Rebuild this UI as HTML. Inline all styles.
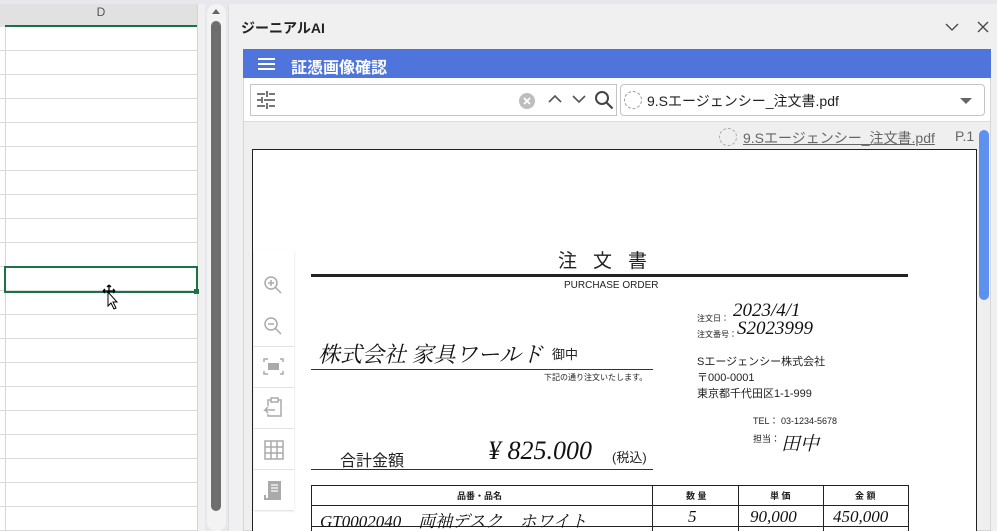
<!DOCTYPE html>
<html style="width:997px;height:531px;overflow:hidden"><head><meta charset="utf-8"><style>
*{margin:0;padding:0;box-sizing:border-box}
body{width:997px;height:531px;overflow:hidden;background:#e6e8ee;font-family:"Liberation Sans","Noto Sans CJK JP",sans-serif;position:relative}
.a{position:absolute}
.hw{font-family:"Liberation Serif","Noto Serif CJK SC",serif;font-style:italic;color:#111;white-space:nowrap}
.jp{font-family:"Liberation Sans","Noto Sans CJK JP",sans-serif;color:#222;white-space:nowrap}
</style></head><body>
<div class="a" style="left:0;top:4px;width:205px;height:527px;background:#fff"></div>
<div class="a" style="left:5px;top:4px;width:192px;height:23px;background:#e1e1e1;border-bottom:2px solid #1e7145;text-align:center;font-size:12px;color:#555;line-height:17px">D</div>
<div class="a" style="left:0;top:4px;width:5px;height:23px;background:#e1e1e1"></div>
<div class="a" style="left:197px;top:4px;width:8px;height:527px;background:#f0f0f0;border-left:1px solid #d4d4d4"></div>
<div class="a" style="left:5px;top:27px;width:1px;height:504px;background:#d8d8d8"></div>
<div class="a" style="left:0;top:27px;width:197px;height:504px;background:repeating-linear-gradient(to bottom,transparent 0 23px,#dadada 23px 24px)"></div>
<div class="a" style="left:4px;top:266px;width:194px;height:27px;border:2px solid #1e7145"></div>
<div class="a" style="left:194px;top:289px;width:5px;height:5px;background:#1e7145"></div>
<svg class="a" style="left:100px;top:283px" width="22" height="28"><path d="M9 2v12M3 8h12M9 2l-2 2M9 2l2 2M3 8l2-2M3 8l2 2M15 8l-2-2M15 8l-2 2" stroke="#000" stroke-width="1.3" fill="none"/><path d="M8 9v14l3-3 3 6 2-1-3-6h4z" fill="#fff" stroke="#000" stroke-width="1"/></svg>
<div class="a" style="left:207px;top:4px;width:19px;height:527px;background:#f3f3f3;border-radius:9px"></div>
<div class="a" style="left:212px;top:9px;width:0;height:0;border-left:4px solid transparent;border-right:4px solid transparent;border-bottom:5px solid #666"></div>
<div class="a" style="left:211px;top:21px;width:10px;height:490px;background:#6e6e6e;border-radius:5px"></div>
<div class="a" style="left:228px;top:4px;width:769px;height:527px;background:#f0f0f0;border-left:1px solid #ddd"></div>
<div class="a" style="left:241px;top:18px;font-size:14px;font-weight:bold;color:#222">ジーニアルAI</div>
<svg class="a" style="left:944px;top:21px" width="16" height="12"><path d="M2 3l6 6 6-6" stroke="#444" stroke-width="1.3" fill="none"/></svg>
<svg class="a" style="left:976px;top:20px" width="14" height="14"><path d="M2 2l10 10M12 2L2 12" stroke="#444" stroke-width="1.3"/></svg>
<div class="a" style="left:243px;top:49px;width:748px;height:482px;border:1px solid #d6d6d6;background:#efefef"></div>
<div class="a" style="left:243px;top:49px;width:748px;height:29px;background:#4f74dc"></div>
<div class="a" style="left:258px;top:58px;width:17px;height:2px;background:#fff;box-shadow:0 5px 0 #fff,0 10px 0 #fff"></div>
<div class="a" style="left:291px;top:54px;font-size:16px;color:#fff;font-weight:bold">証憑画像確認</div>
<div class="a" style="left:244px;top:78px;width:746px;height:44px;background:#fff;border-bottom:1px solid #ddd"></div>
<div class="a" style="left:250px;top:84px;width:367px;height:32px;border:1px solid #c4c4c4;background:#fff"></div>
<svg class="a" style="left:255px;top:90px" width="22" height="20"><path d="M2 4h8M14 4h6M12 1v6M2 10h4M9 10h11M7 7v6M2 16h8M14 16h6M12 13v6" stroke="#666" stroke-width="1.8"/></svg>
<svg class="a" style="left:518px;top:92px" width="18" height="18"><circle cx="9" cy="9" r="8" fill="#bdbdbd"/><path d="M6 6l6 6M12 6l-6 6" stroke="#fff" stroke-width="1.8"/></svg>
<svg class="a" style="left:548px;top:94px" width="14" height="10"><path d="M1 8l6-6 6 6" stroke="#555" stroke-width="1.6" fill="none"/></svg>
<svg class="a" style="left:572px;top:94px" width="14" height="10"><path d="M1 2l6 6 6-6" stroke="#555" stroke-width="1.6" fill="none"/></svg>
<svg class="a" style="left:594px;top:90px" width="20" height="20"><circle cx="8" cy="8" r="6" stroke="#444" stroke-width="2" fill="none"/><path d="M12.5 12.5l6 6" stroke="#444" stroke-width="2.2"/></svg>
<div class="a" style="left:620px;top:84px;width:365px;height:32px;border:1px solid #c4c4c4;border-radius:4px;background:#fff"></div>
<div class="a" style="left:624px;top:91px;width:18px;height:18px;border:1px dashed #999;border-radius:50%"></div>
<div class="a" style="left:647px;top:91px;font-size:14px;color:#222">9.Sエージェンシー_注文書.pdf</div>
<div class="a" style="left:960px;top:98px;width:0;height:0;border-left:6px solid transparent;border-right:6px solid transparent;border-top:6px solid #666"></div>
<div class="a" style="left:719px;top:128px;width:18px;height:18px;border:1px dashed #aaa;border-radius:50%"></div>
<div class="a" style="left:743px;top:128px;font-size:14px;color:#666;text-decoration:underline">9.Sエージェンシー_注文書.pdf</div>
<div class="a" style="left:955px;top:128px;font-size:14px;color:#666">P.1</div>
<div class="a" style="left:979px;top:130px;width:10px;height:170px;background:#5e91ee;border-radius:5px"></div>
<div class="a" style="left:252px;top:149px;width:725px;height:382px;background:#fff;border:1px solid #222;border-bottom:none"></div>
<div class="a jp" style="left:558px;top:246px;font-size:19px;letter-spacing:16px">注文書</div>
<div class="a" style="left:311px;top:274px;width:597px;height:3px;background:#222"></div>
<div class="a jp" style="left:564px;top:280px;font-size:10px">PURCHASE ORDER</div>
<div class="a hw" style="left:318px;top:338px;font-size:22px">株式会社 家具ワールド</div>
<div class="a jp" style="left:552px;top:344px;font-size:13px">御中</div>
<div class="a" style="left:311px;top:369px;width:342px;height:1px;background:#333"></div>
<div class="a jp" style="left:544px;top:372px;font-size:8px">下記の通り注文いたします。</div>
<div class="a jp" style="left:697px;top:313px;font-size:8px">注文日：</div>
<div class="a hw" style="left:733px;top:300px;font-size:19px">2023/4/1</div>
<div class="a jp" style="left:697px;top:329px;font-size:8px">注文番号：</div>
<div class="a hw" style="left:737px;top:318px;font-size:19px">S2023999</div>
<div class="a jp" style="left:697px;top:354px;font-size:11px;line-height:16px">Sエージェンシー株式会社<br>〒000-0001<br>東京都千代田区1-1-999</div>
<div class="a jp" style="left:753px;top:414px;font-size:9px">TEL： 03-1234-5678</div>
<div class="a jp" style="left:753px;top:432px;font-size:9px">担当：</div>
<div class="a hw" style="left:781px;top:429px;font-size:19px">田中</div>
<div class="a jp" style="left:340px;top:447px;font-size:16px">合計金額</div>
<div class="a hw" style="left:488px;top:436px;font-size:26px">¥ 825.000</div>
<div class="a jp" style="left:612px;top:447px;font-size:13px">(税込)</div>
<div class="a" style="left:311px;top:469px;width:342px;height:1px;background:#333"></div>
<div class="a" style="left:311px;top:485px;width:598px;height:50px;border:1px solid #222;border-bottom:none"></div>
<div class="a" style="left:311px;top:505px;width:598px;height:1px;background:#222"></div>
<div class="a" style="left:311px;top:526px;width:598px;height:1px;background:#222"></div>
<div class="a" style="left:652px;top:485px;width:1px;height:46px;background:#222"></div>
<div class="a" style="left:738px;top:485px;width:1px;height:46px;background:#222"></div>
<div class="a" style="left:823px;top:485px;width:1px;height:46px;background:#222"></div>
<div class="a jp" style="left:457px;top:489px;font-size:9px;font-weight:bold">品番・品名</div>
<div class="a jp" style="left:686px;top:489px;font-size:9px;font-weight:bold">数 量</div>
<div class="a jp" style="left:770px;top:489px;font-size:9px;font-weight:bold">単 価</div>
<div class="a jp" style="left:855px;top:489px;font-size:9px;font-weight:bold">金 額</div>
<div class="a hw" style="left:320px;top:507px;font-size:17px">GT0002040　両袖デスク　ホワイト</div>
<div class="a hw" style="left:688px;top:507px;font-size:17px">5</div>
<div class="a hw" style="left:750px;top:507px;font-size:17px">90,000</div>
<div class="a hw" style="left:833px;top:507px;font-size:17px">450,000</div>
<div class="a" style="left:254px;top:250px;width:40px;height:260px;background:#fff;box-shadow:0 1px 2px rgba(0,0,0,.15)"></div>
<svg class="a" style="left:262px;top:274px" width="22" height="22"><circle cx="9" cy="9" r="6" stroke="#aaa" stroke-width="1.5" fill="none"/><path d="M13 13l6 6M6 9h6M9 6v6" stroke="#aaa" stroke-width="1.5"/></svg>
<svg class="a" style="left:262px;top:315px" width="22" height="22"><circle cx="9" cy="9" r="6" stroke="#aaa" stroke-width="1.5" fill="none"/><path d="M13 13l6 6M6 9h6" stroke="#aaa" stroke-width="1.5"/></svg>
<div class="a" style="left:254px;top:346px;width:40px;height:1px;background:#e2e2e2;box-shadow:0 41px 0 #e2e2e2,0 82px 0 #e2e2e2,0 123px 0 #e2e2e2"></div>
<svg class="a" style="left:263px;top:357px" width="22" height="20"><path d="M1 5V2h4M17 2h3v3M20 14v3h-3M5 17H1v-3" stroke="#aaa" stroke-width="1.5" fill="none"/><rect x="5" y="6" width="11" height="7" fill="#aaa"/></svg>
<svg class="a" style="left:263px;top:397px" width="22" height="22"><path d="M8 3H5v6M5 17v2h13V3h-3" stroke="#aaa" stroke-width="1.5" fill="none"/><rect x="8" y="1" width="7" height="4" fill="none" stroke="#aaa" stroke-width="1.5"/><path d="M12 13H2l3-3M2 13l3 3" stroke="#aaa" stroke-width="1.5" fill="none"/></svg>
<svg class="a" style="left:263px;top:439px" width="22" height="22"><rect x="2" y="2" width="18" height="18" fill="none" stroke="#aaa" stroke-width="1.5"/><path d="M8 2v18M14 2v18M2 8h18M2 14h18" stroke="#aaa" stroke-width="1.5"/></svg>
<svg class="a" style="left:263px;top:479px" width="22" height="22"><path d="M5 2h13v17H5z" fill="#aaa"/><path d="M8 6h7M8 9h7M8 12h7" stroke="#fff" stroke-width="1.3"/><path d="M2 16v4h16" stroke="#aaa" stroke-width="2" fill="none"/></svg>
</body></html>
